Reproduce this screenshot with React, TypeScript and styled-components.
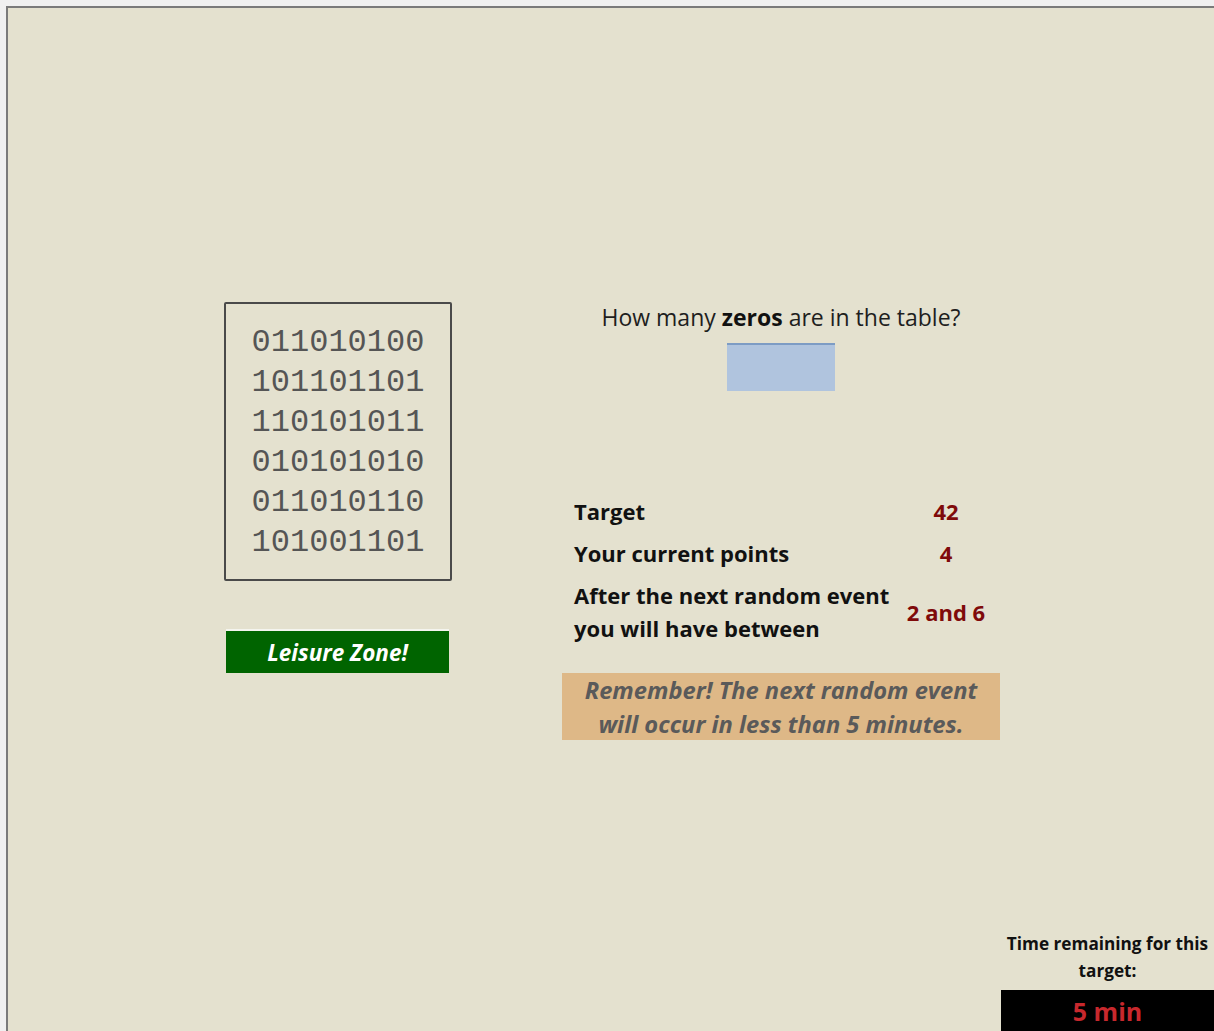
import * as React from 'react'
import styled, { createGlobalStyle } from 'styled-components'

const GlobalStyle = createGlobalStyle`
  html, body {
    margin: 0;
    padding: 0;
    background: #f0f0f0;
    overflow: hidden;
  }
  body {
    font-family: "Open Sans", Lato, "Liberation Sans", sans-serif;
  }
`

const rows = ['011010100', '101101101', '110101011', '010101010', '011010110', '101001101']

const Frame = styled.div`
  margin: 6px 0 0 6px;
  height: calc(100vh - 6px);
  box-sizing: border-box;
  border-top: 2px solid #7a7a7a;
  border-left: 2px solid #7a7a7a;
  background: #e4e1cf;
  display: flex;
  flex-direction: column;
  overflow: hidden;
`

const Main = styled.div`
  flex: 1;
  display: flex;
  align-items: flex-start;
  padding: 294px 0 0 216px;
  gap: 110px;
`

const LeftColumn = styled.div`
  width: 228px;
  display: flex;
  flex-direction: column;
  align-items: center;
  gap: 48px;
`

const DigitTable = styled.div`
  width: 228px;
  height: 279px;
  box-sizing: border-box;
  border: 2px solid #4a4a4a;
  border-radius: 2px;
  display: flex;
  flex-direction: column;
  align-items: center;
  justify-content: center;
  font-family: "Liberation Mono", "DejaVu Sans Mono", monospace;
  font-size: 32px;
  line-height: 40px;
  color: #555555;
  padding-top: 2px;
`

const LeisureButton = styled.button`
  width: 223px;
  height: 44px;
  margin-left: -1px;
  border: none;
  border-top: 2px solid #f4f4ee;
  background: #006400;
  color: #ffffff;
  font-family: inherit;
  font-size: 22.5px;
  font-weight: 700;
  font-style: italic;
  cursor: pointer;
`

const RightColumn = styled.div`
  width: 438px;
  display: flex;
  flex-direction: column;
  align-items: center;
`

const Question = styled.div`
  margin-top: 1px;
  font-size: 23px;
  line-height: 29px;
  color: #1e1e1e;

  b {
    font-weight: 700;
    color: #111;
  }
`

const AnswerField = styled.input`
  margin-top: 11px;
  width: 108px;
  height: 48px;
  box-sizing: border-box;
  border: none;
  border-top: 2px solid #7d9cc4;
  background: #b0c4de;
  outline: none;
`

const Stats = styled.div`
  align-self: stretch;
  margin-top: 104px;
  padding-left: 12px;
  display: grid;
  grid-template-columns: 321px 102px;
  row-gap: 9px;
  align-items: center;
`

const Label = styled.div`
  font-size: 22px;
  font-weight: 700;
  line-height: 33px;
  color: #111;
`

const Value = styled.div`
  font-size: 22px;
  font-weight: 700;
  line-height: 33px;
  color: #7f0a0a;
  text-align: center;
`

const Reminder = styled.div`
  align-self: stretch;
  margin-top: 28px;
  height: 67px;
  background: #deb887;
  display: flex;
  align-items: center;
  justify-content: center;
  text-align: center;
  font-size: 23.7px;
  font-weight: 700;
  font-style: italic;
  line-height: 34px;
  color: #5a5a5a;
`

const Footer = styled.div`
  align-self: flex-end;
  width: 213px;
  display: flex;
  flex-direction: column;
  align-items: center;
`

const TimerCaption = styled.div`
  font-size: 17.2px;
  font-weight: 700;
  line-height: 27px;
  color: #111;
  text-align: center;
  margin-bottom: 6px;
`

const TimerBox = styled.div`
  align-self: stretch;
  height: 41px;
  background: #000;
  color: #c8282d;
  font-size: 25px;
  font-weight: 700;
  display: flex;
  align-items: center;
  justify-content: center;
`

export default function App() {
  return (
    <>
      <GlobalStyle />
      <Frame>
        <Main>
          <LeftColumn>
            <DigitTable>
              {rows.map((r) => (
                <div key={r}>{r}</div>
              ))}
            </DigitTable>
            <LeisureButton>Leisure Zone!</LeisureButton>
          </LeftColumn>
          <RightColumn>
            <Question>
              How many <b>zeros</b> are in the table?
            </Question>
            <AnswerField />
            <Stats>
              <Label>Target</Label>
              <Value>42</Value>
              <Label>Your current points</Label>
              <Value>4</Value>
              <Label>
                After the next random event
                <br />
                you will have between
              </Label>
              <Value>2 and 6</Value>
            </Stats>
            <Reminder>
              Remember! The next random event
              <br />
              will occur in less than 5 minutes.
            </Reminder>
          </RightColumn>
        </Main>
        <Footer>
          <TimerCaption>
            Time remaining for this
            <br />
            target:
          </TimerCaption>
          <TimerBox>5 min</TimerBox>
        </Footer>
      </Frame>
    </>
  )
}
